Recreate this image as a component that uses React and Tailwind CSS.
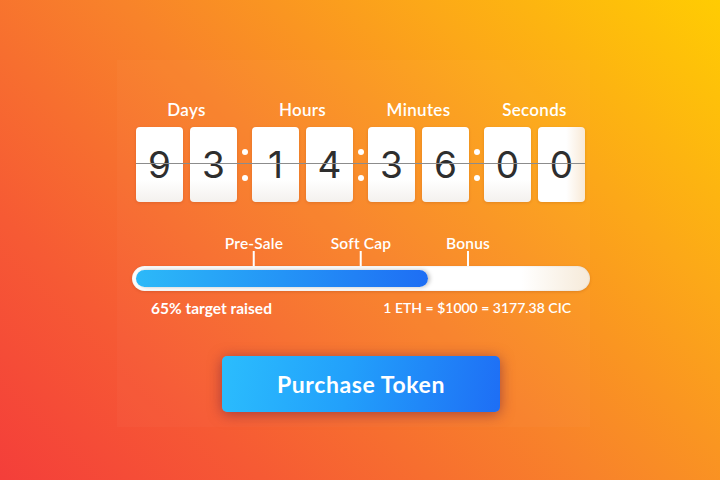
const pairs = [
  { label: "Days", digits: ["9", "3"] },
  { label: "Hours", digits: ["1", "4"] },
  { label: "Minutes", digits: ["3", "6"] },
  { label: "Seconds", digits: ["0", "0"] },
];

function Card({ d, last }) {
  return (
    <div
      className={
        "w-[47px] h-[75px] rounded-[4px] flex items-center justify-center shadow-[0_1px_3px_rgba(120,40,0,0.18)] " +
        (last
          ? "bg-[linear-gradient(90deg,#ffffff_0%,#ffffff_60%,#f8e9d6_100%)]"
          : "bg-[linear-gradient(180deg,#ffffff_0%,#ffffff_70%,#f4f1ee_100%)]")
      }
    >
      <span className="font-['Inter',sans-serif] text-[37px] leading-none text-[#2e2e2e] font-normal">
        {d}
      </span>
    </div>
  );
}

function Colon() {
  return (
    <div className="w-[15px] flex flex-col items-center gap-[20px]">
      <div className="w-[6px] h-[6px] rounded-full bg-white" />
      <div className="w-[6px] h-[6px] rounded-full bg-white" />
    </div>
  );
}

export default function App() {
  return (
    <div className="w-[720px] h-[480px] overflow-hidden bg-[linear-gradient(45deg,#f43e3a_0%,#f65a34_22%,#f8832a_50%,#fca818_75%,#ffcc02_100%)] pt-[60px] pl-[117px] font-['Lato',sans-serif] text-white">
      <div className="w-[473px] h-[367px] bg-white/[0.025] flex flex-col pt-[40px]">
        {/* labels */}
        <div className="flex ml-[19px]">
          {pairs.map((p, i) => (
            <div key={p.label} className="flex">
              <div className="w-[101px] text-center text-[17px] leading-[20px] font-semibold tracking-[0.3px]">
                {p.label}
              </div>
              {i < 3 && <div className="w-[15px]" />}
            </div>
          ))}
        </div>

        {/* timer */}
        <div className="relative flex items-center ml-[19px] mt-[7px] w-fit">
          {pairs.map((p, i) => (
            <div key={p.label} className="flex items-center">
              <div className="flex gap-[7px]">
                <Card d={p.digits[0]} />
                <Card d={p.digits[1]} last={i === 3} />
              </div>
              {i < 3 && <Colon />}
            </div>
          ))}
          <div className="absolute left-0 right-0 top-[36px] h-px bg-[#8c8c8c]" />
        </div>

        {/* progress */}
        <div className="ml-[15px] w-[458px] flex flex-col">
          <div className="relative mt-[64px]">
            {[
              { t: "Pre-Sale", x: 122 },
              { t: "Soft Cap", x: 229 },
              { t: "Bonus", x: 336 },
            ].map((m) => (
              <div
                key={m.t}
                className="absolute bottom-full flex flex-col items-center -translate-x-1/2"
                style={{ left: m.x }}
              >
                <span className="text-[15.5px] leading-[16px] font-semibold whitespace-nowrap tracking-[0.2px]">{m.t}</span>
                <div className="w-[2px] h-[15px] bg-white" />
              </div>
            ))}
            <div className="h-[25px] rounded-full p-[4px] bg-[linear-gradient(90deg,#ffffff_0%,#ffffff_85%,#f6ead9_100%)] shadow-[0_1px_3px_rgba(120,40,0,0.2),inset_0_0_2px_rgba(0,0,0,0.12)]">
              <div className="h-[17px] w-[292px] rounded-full bg-[linear-gradient(90deg,#2cb9f8_0%,#2494f6_50%,#1e6ef4_100%)] shadow-[2px_0_4px_rgba(0,0,0,0.25)]" />
            </div>
          </div>

          <div className="flex justify-between items-center px-[19px] mt-[8px] leading-[18px]">
            <span className="text-[15.5px] font-bold">65% target raised</span>
            <span className="text-[14px] font-semibold">1 ETH = $1000 = 3177.38 CIC</span>
          </div>

          <div className="flex justify-center mt-[39px]">
            <button className="w-[278px] h-[56px] rounded-[5px] bg-[linear-gradient(100deg,#2bbdfd_0%,#22a0fb_45%,#1e6ef5_100%)] shadow-[0_2px_14px_rgba(110,30,60,0.6)] text-white text-[23px] font-bold tracking-[0.6px]">
              Purchase Token
            </button>
          </div>
        </div>
      </div>
    </div>
  );
}
